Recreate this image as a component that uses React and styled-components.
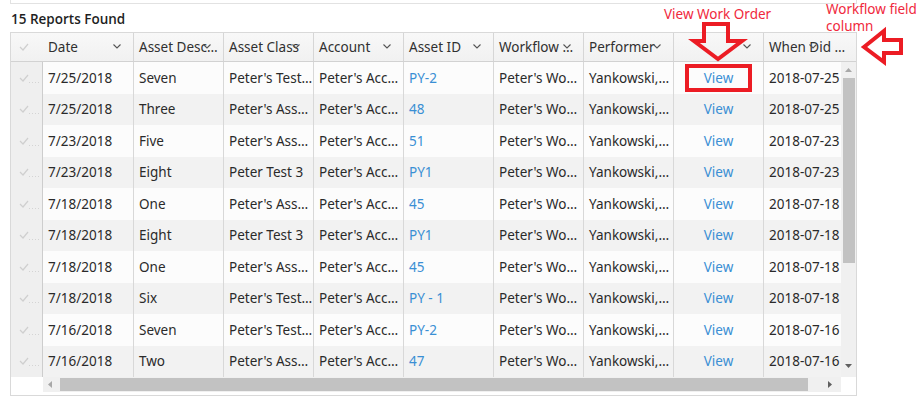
import React from 'react';
import styled, { createGlobalStyle } from 'styled-components';

const GlobalStyle = createGlobalStyle`
  html, body { margin: 0; padding: 0; background: #ffffff; }
  body { font-family: "Noto Sans", "Open Sans", sans-serif; }
`;

const Page = styled.div`
  position: relative;
  width: 920px;
  height: 399px;
  padding-left: 10px;
  box-sizing: border-box;
  overflow: hidden;
`;

const TopStrip = styled.div`
  width: 847px;
  height: 4px;
  box-sizing: border-box;
  border: 1px solid #e2e2e2;
  border-top: none;
`;

const Title = styled.div`
  height: 28px;
  box-sizing: border-box;
  padding: 2px 0 0 1px;
  line-height: 26px;
  font-family: "Open Sans", "Noto Sans", sans-serif;
  font-weight: 600;
  font-size: 13.5px;
  color: #1f1f1f;
`;

const Grid = styled.div`
  width: 847px;
  height: 364px;
  box-sizing: border-box;
  border: 1px solid #d9d9d9;
  display: flex;
  flex-direction: column;
  background: #fff;
`;

const Header = styled.div`
  display: flex;
  height: 29px;
  box-sizing: border-box;
  border-bottom: 1px solid #d2d2d2;
  background: linear-gradient(#f8f8f8, #f1f1f1);
  overflow: hidden;
`;

const HeaderCheck = styled.div`
  flex: 0 0 32px;
  display: flex;
  align-items: center;
  padding-left: 8px;
  box-sizing: border-box;
`;

const HeaderCell = styled.div`
  position: relative;
  flex: 0 0 ${(p) => p.$w}px;
  box-sizing: border-box;
  border-right: 1px solid #d6d6d6;
  padding: 0 5px;
  display: flex;
  align-items: center;
  font-size: 13.5px;
  color: #303030;
  white-space: nowrap;
  overflow: hidden;
`;

const HeaderFill = styled.div`
  flex: 1;
`;

const Chevron = styled.svg`
  position: absolute;
  right: ${(p) => p.$right}px;
  top: 11px;
  width: 8px;
  height: 5px;
`;

const Body = styled.div`
  display: flex;
  height: 315px;
`;

const Viewport = styled.div`
  width: 830px;
  overflow: hidden;
`;

const Row = styled.div`
  display: flex;
  height: 31.5px;
  background: ${(p) => (p.$alt ? '#f2f2f2' : '#fcfcfc')};
`;

const CheckCell = styled.div`
  flex: 0 0 32px;
  box-sizing: border-box;
  background: #efefef;
  border-right: 1px solid #cdcdcd;
  display: flex;
  align-items: center;
  padding-left: 8px;
`;

const Cell = styled.div`
  flex: 0 0 ${(p) => p.$w}px;
  box-sizing: border-box;
  border-right: 1px solid #d8d8d8;
  padding: 0 5px;
  display: flex;
  align-items: center;
  justify-content: ${(p) => (p.$center ? 'center' : 'flex-start')};
  font-size: 13.5px;
  color: ${(p) => (p.$link ? '#3a8fd4' : '#2a2a2a')};
  white-space: nowrap;
  overflow: hidden;
`;

const VScroll = styled.div`
  flex: 0 0 15px;
  background: #f0f0f0;
  display: flex;
  flex-direction: column;
  align-items: center;
`;

const ArrowBox = styled.div`
  flex: 0 0 ${(p) => p.$size}px;
  display: flex;
  align-items: center;
  justify-content: center;
`;

const VThumb = styled.div`
  width: 12px;
  height: 185px;
  background: #c2c2c2;
`;

const Spacer = styled.div`
  flex: 1;
`;

const HScrollRow = styled.div`
  display: flex;
  height: 15px;
`;

const Corner = styled.div`
  flex: 0 0 ${(p) => p.$w}px;
  background: #ffffff;
`;

const HScroll = styled.div`
  flex: 0 0 798px;
  background: #f0f0f0;
  display: flex;
  align-items: center;
`;

const HThumb = styled.div`
  width: 748px;
  height: 13px;
  margin-left: 3px;
  background: #c2c2c2;
`;

const Overlay = styled.svg`
  position: absolute;
  left: 0;
  top: 0;
  width: 920px;
  height: 399px;
  pointer-events: none;
`;

const Note = styled.div`
  position: absolute;
  left: ${(p) => p.$x}px;
  top: ${(p) => p.$y}px;
  font-family: "Noto Sans", "Open Sans", sans-serif;
  font-size: 13.5px;
  line-height: 16px;
  color: #f0283c;
  white-space: nowrap;
`;

const CheckMark = ({ dots }) => (
  <svg width="22" height="12" viewBox="0 0 22 12">
    <polyline points="1,6 4,9 9,3" fill="none" stroke="#cfcfcf" strokeWidth="1.2" />
    {dots && <line x1="10" y1="10.5" x2="22" y2="10.5" stroke="#d4d4d4" strokeWidth="1" strokeDasharray="1 2" />}
  </svg>
);

const ChevronIcon = ({ right }) => (
  <Chevron $right={right} viewBox="0 0 8 5">
    <polyline points="0.5,0.5 4,4 7.5,0.5" fill="none" stroke="#555" strokeWidth="1.1" />
  </Chevron>
);

const columns = [
  { key: 'date', label: 'Date', w: 91 },
  { key: 'desc', label: 'Asset Desc…', w: 90 },
  { key: 'cls', label: 'Asset Class', w: 90, chev: 13 },
  { key: 'acct', label: 'Account', w: 90 },
  { key: 'id', label: 'Asset ID', w: 90, link: true },
  { key: 'wf', label: 'Workflow …', w: 90 },
  { key: 'perf', label: 'Performer', w: 90 },
  { key: 'view', label: '', w: 90, link: true, center: true },
  { key: 'when', label: 'When Did …', w: 120, chev: 66 },
];

const rows = [
  ['7/25/2018', 'Seven', "Peter's Test…", 'PY-2', '2018-07-25'],
  ['7/25/2018', 'Three', "Peter's Ass…", '48', '2018-07-25'],
  ['7/23/2018', 'Five', "Peter's Ass…", '51', '2018-07-23'],
  ['7/23/2018', 'Eight', 'Peter Test 3', 'PY1', '2018-07-23'],
  ['7/18/2018', 'One', "Peter's Ass…", '45', '2018-07-18'],
  ['7/18/2018', 'Eight', 'Peter Test 3', 'PY1', '2018-07-18'],
  ['7/18/2018', 'One', "Peter's Ass…", '45', '2018-07-18'],
  ['7/18/2018', 'Six', "Peter's Test…", 'PY - 1', '2018-07-18'],
  ['7/16/2018', 'Seven', "Peter's Test…", 'PY-2', '2018-07-16'],
  ['7/16/2018', 'Two', "Peter's Ass…", '47', '2018-07-16'],
].map(([date, desc, cls, id, when]) => ({
  date,
  desc,
  cls,
  acct: "Peter's Acc…",
  id,
  wf: "Peter's Wo…",
  perf: 'Yankowski,…',
  view: 'View',
  when,
}));

const Tri = ({ dir, color }) => {
  const pts = {
    up: '0,4 3.5,0 7,4',
    down: '0,0 3.5,4 7,0',
    left: '4,0 0,3.5 4,7',
    right: '0,0 4,3.5 0,7',
  }[dir];
  const vert = dir === 'up' || dir === 'down';
  return (
    <svg width={vert ? 7 : 4} height={vert ? 4 : 7} viewBox={vert ? '0 0 7 4' : '0 0 4 7'}>
      <polygon points={pts} fill={color} />
    </svg>
  );
};

export default function App() {
  return (
    <Page>
      <GlobalStyle />
      <TopStrip />
      <Title>15 Reports Found</Title>
      <Grid>
        <Header>
          <HeaderCheck>
            <CheckMark />
          </HeaderCheck>
          {columns.map((c) => (
            <HeaderCell key={c.key} $w={c.w}>
              {c.label}
              <ChevronIcon right={c.chev ?? 12} />
            </HeaderCell>
          ))}
          <HeaderFill />
        </Header>
        <Body>
          <Viewport>
            {rows.map((r, i) => (
              <Row key={i} $alt={i % 2 === 1}>
                <CheckCell>
                  <CheckMark dots />
                </CheckCell>
                {columns.map((c) => (
                  <Cell key={c.key} $w={c.w} $link={c.link} $center={c.center}>
                    {r[c.key]}
                  </Cell>
                ))}
              </Row>
            ))}
          </Viewport>
          <VScroll>
            <ArrowBox $size={16}>
              <Tri dir="up" color="#a8a8a8" />
            </ArrowBox>
            <VThumb />
            <Spacer />
            <ArrowBox $size={22}>
              <Tri dir="down" color="#606060" />
            </ArrowBox>
          </VScroll>
        </Body>
        <HScrollRow>
          <Corner $w={32} />
          <HScroll>
            <ArrowBox $size={14}>
              <Tri dir="left" color="#a8a8a8" />
            </ArrowBox>
            <HThumb />
            <Spacer />
            <ArrowBox $size={22}>
              <Tri dir="right" color="#606060" />
            </ArrowBox>
          </HScroll>
          <Corner $w={15} />
        </HScrollRow>
      </Grid>

      <Note $x={664} $y={6}>View Work Order</Note>
      <Note $x={826} $y={1}>Workflow field</Note>
      <Note $x={826} $y={18}>column</Note>
      <Overlay viewBox="0 0 920 399">
        <polygon
          points="704,24 728,24 728,41 742,41 718,59 694,41 704,41"
          fill="none"
          stroke="#ec1c24"
          strokeWidth="4"
          strokeLinejoin="miter"
        />
        <rect x="687" y="66" width="63" height="24" fill="none" stroke="#ec1c24" strokeWidth="4" />
        <polygon
          points="864,47 884,31 884,40 901,40 901,53 884,53 884,62"
          fill="none"
          stroke="#ec1c24"
          strokeWidth="4"
          strokeLinejoin="miter"
        />
      </Overlay>
    </Page>
  );
}
